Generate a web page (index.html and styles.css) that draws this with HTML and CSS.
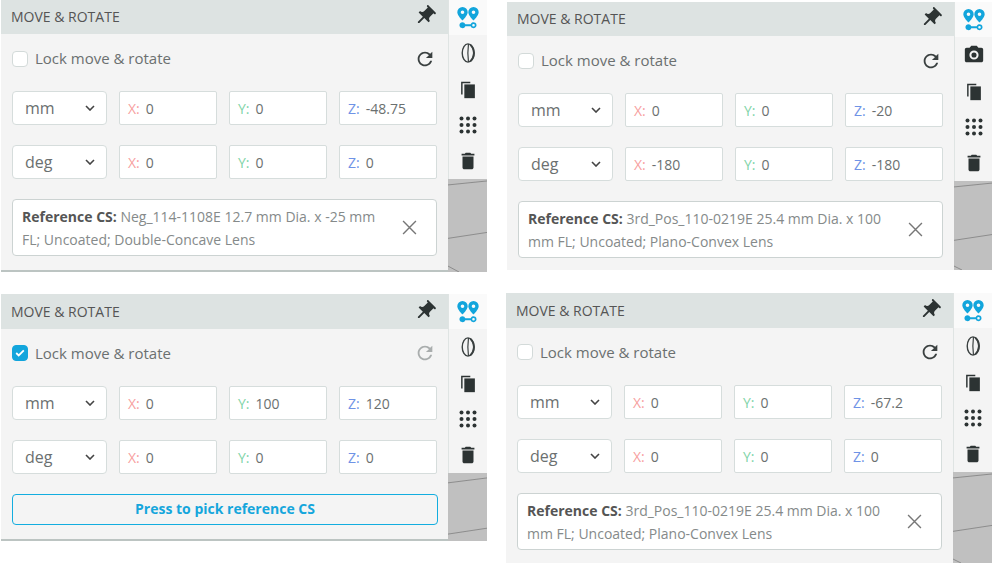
FILE: index.html
```html
<!DOCTYPE html>
<html lang="en">
<head>
    <meta charset="UTF-8">
    <meta name="viewport" content="width=device-width, initial-scale=1.0">
    <title>Move &amp; Rotate</title>
    <link rel="stylesheet" href="styles.css">
</head>
<body>
    <svg class="icon-defs" aria-hidden="true">
        <symbol id="i-pin" viewBox="0 0 24 24"><path d="M16 9V4h1c.55 0 1-.45 1-1s-.45-1-1-1H7c-.55 0-1 .45-1 1s.45 1 1 1h1v5c0 1.66-1.34 3-3 3v2h5.97v7l1 1 1-1v-7H19v-2c-1.66 0-3-1.34-3-3z" transform="rotate(45 12 12)"/></symbol>
        <symbol id="i-refresh" viewBox="0 0 24 24"><path d="M17.65 6.35C16.2 4.9 14.21 4 12 4c-4.42 0-7.99 3.58-7.99 8s3.57 8 7.99 8c3.73 0 6.84-2.55 7.73-6h-2.08c-.82 2.33-3.04 4-5.65 4-3.31 0-6-2.69-6-6s2.69-6 6-6c1.66 0 3.14.69 4.22 1.78L13 11h7V4l-2.35 2.35z"/></symbol>
        <symbol id="i-points" viewBox="0 0 22 22">
            <path fill-rule="evenodd" d="M5.500 0A5.200 5.200 0 0 0 .3 5.200c0 3.400 5.200 8.300 5.200 8.300s5.200-4.900 5.200-8.300A5.200 5.200 0 0 0 5.500 0zm0 3.400a1.800 1.800 0 1 1 0 3.600 1.800 1.800 0 0 1 0-3.600z"/>
            <path fill-rule="evenodd" d="M16.500 0a5.200 5.200 0 0 0-5.200 5.200c0 3.400 5.200 8.300 5.200 8.300s5.200-4.900 5.200-8.300A5.200 5.200 0 0 0 16.500 0zm0 3.400a1.800 1.800 0 1 1 0 3.600 1.800 1.800 0 0 1 0-3.600z"/>
            <path fill-rule="evenodd" d="M5.500 15.200a3 3 0 0 1 2.800 2h5.400a3 3 0 1 1 0 2H8.300a3 3 0 1 1-2.800-4zm11 1.700a1.300 1.300 0 1 0 0 2.600 1.300 1.300 0 0 0 0-2.600z"/>
        </symbol>
        <symbol id="i-lens" viewBox="0 0 24 24">
            <g fill="none" stroke="currentColor">
                <ellipse cx="12" cy="12" rx="6.300" ry="10" stroke-width="1.500"/>
                <path d="M12.500 2.200c-.8 6-.8 13.500 0 19.600" stroke-width="1.300"/>
                <path d="M14.500 3c2.800 2.500 4 5.800 4 9s-1.200 6.500-4 9" stroke-width="2.200"/>
            </g>
        </symbol>
        <symbol id="i-camera" viewBox="0 0 24 24"><path fill-rule="evenodd" d="M9 2 7.170 4H4c-1.100 0-2 .9-2 2v12c0 1.100.9 2 2 2h16c1.100 0 2-.9 2-2V6c0-1.100-.9-2-2-2h-3.170L15 2H9zm3 5a5 5 0 1 1 0 10 5 5 0 0 1 0-10zm0 2.200a2.800 2.800 0 1 0 0 5.600 2.800 2.800 0 0 0 0-5.600z"/></symbol>
        <symbol id="i-copy" viewBox="0 0 24 24"><path d="M4.500 4h10v1.600H6.100V18H4.500V4z"/><path d="M8 7h11.500v15H8z"/></symbol>
        <symbol id="i-grid" viewBox="0 0 18 18">
            <circle cx="2.500" cy="2.500" r="2"/><circle cx="9" cy="2.500" r="2"/><circle cx="15.500" cy="2.500" r="2"/>
            <circle cx="2.500" cy="9" r="2"/><circle cx="9" cy="9" r="2"/><circle cx="15.500" cy="9" r="2"/>
            <circle cx="2.500" cy="15.500" r="2"/><circle cx="9" cy="15.500" r="2"/><circle cx="15.500" cy="15.500" r="2"/>
        </symbol>
        <symbol id="i-trash" viewBox="0 0 24 24"><path d="M6 19c0 1.100.9 2 2 2h8c1.100 0 2-.9 2-2V7H6v12zM19 4h-3.500l-1-1h-5l-1 1H5v2h14V4z"/></symbol>
        <symbol id="i-chevron" viewBox="0 0 10 6"><path d="M1 1l4 4 4-4" fill="none" stroke="currentColor" stroke-width="1.600"/></symbol>
        <symbol id="i-close" viewBox="0 0 14 14"><path d="M1 1l12 12M13 1L1 13" fill="none" stroke="currentColor" stroke-width="1.300"/></symbol>
    </svg>

    <div class="board">

        <div class="panel panel-a">
            <div class="main">
                <div class="head">
                    <span class="title">MOVE &amp; ROTATE</span>
                    <svg class="pin-btn"><use href="#i-pin"/></svg>
                </div>
                <div class="body">
                    <div class="lock-row">
                        <span class="check"></span>
                        <span class="lock-text">Lock move &amp; rotate</span>
                        <svg class="reset"><use href="#i-refresh"/></svg>
                    </div>
                    <div class="field-row">
                        <div class="unit">mm<svg class="chevron"><use href="#i-chevron"/></svg></div>
                        <div class="field"><span class="ax-x">X:</span>0</div>
                        <div class="field"><span class="ax-y">Y:</span>0</div>
                        <div class="field"><span class="ax-z">Z:</span>-48.75</div>
                    </div>
                    <div class="field-row">
                        <div class="unit">deg<svg class="chevron"><use href="#i-chevron"/></svg></div>
                        <div class="field"><span class="ax-x">X:</span>0</div>
                        <div class="field"><span class="ax-y">Y:</span>0</div>
                        <div class="field"><span class="ax-z">Z:</span>0</div>
                    </div>
                    <div class="ref-box">
                        <p class="ref-text"><b>Reference CS:</b> Neg_114-1108E 12.7 mm Dia. x -25 mm FL; Uncoated; Double-Concave Lens</p>
                        <svg class="close"><use href="#i-close"/></svg>
                    </div>
                </div>
            </div>
            <div class="side">
                <div class="tool active"><svg class="tool-points"><use href="#i-points"/></svg></div>
                <div class="tool"><svg><use href="#i-lens"/></svg></div>
                <div class="tool"><svg><use href="#i-copy"/></svg></div>
                <div class="tool"><svg class="tool-grid"><use href="#i-grid"/></svg></div>
                <div class="tool"><svg><use href="#i-trash"/></svg></div>
                <div class="scene"><svg viewBox="0 0 39 94" preserveAspectRatio="none"><path d="M0 6l39-4M0 60l39-6M0 88l11 6"/></svg></div>
            </div>
        </div>

        <div class="panel panel-b">
            <div class="main">
                <div class="head">
                    <span class="title">MOVE &amp; ROTATE</span>
                    <svg class="pin-btn"><use href="#i-pin"/></svg>
                </div>
                <div class="body">
                    <div class="lock-row">
                        <span class="check"></span>
                        <span class="lock-text">Lock move &amp; rotate</span>
                        <svg class="reset"><use href="#i-refresh"/></svg>
                    </div>
                    <div class="field-row">
                        <div class="unit">mm<svg class="chevron"><use href="#i-chevron"/></svg></div>
                        <div class="field"><span class="ax-x">X:</span>0</div>
                        <div class="field"><span class="ax-y">Y:</span>0</div>
                        <div class="field"><span class="ax-z">Z:</span>-20</div>
                    </div>
                    <div class="field-row">
                        <div class="unit">deg<svg class="chevron"><use href="#i-chevron"/></svg></div>
                        <div class="field"><span class="ax-x">X:</span>-180</div>
                        <div class="field"><span class="ax-y">Y:</span>0</div>
                        <div class="field"><span class="ax-z">Z:</span>-180</div>
                    </div>
                    <div class="ref-box">
                        <p class="ref-text"><b>Reference CS:</b> 3rd_Pos_110-0219E 25.4 mm Dia. x 100 mm FL; Uncoated; Plano-Convex Lens</p>
                        <svg class="close"><use href="#i-close"/></svg>
                    </div>
                </div>
            </div>
            <div class="side">
                <div class="tool active"><svg class="tool-points"><use href="#i-points"/></svg></div>
                <div class="tool"><svg><use href="#i-camera"/></svg></div>
                <div class="tool"><svg><use href="#i-copy"/></svg></div>
                <div class="tool"><svg class="tool-grid"><use href="#i-grid"/></svg></div>
                <div class="tool"><svg><use href="#i-trash"/></svg></div>
                <div class="scene"><svg viewBox="0 0 39 90" preserveAspectRatio="none"><path d="M0 6l39-4M0 60l39-6M0 86l8 4"/></svg></div>
            </div>
        </div>

        <div class="panel panel-c">
            <div class="main">
                <div class="head">
                    <span class="title">MOVE &amp; ROTATE</span>
                    <svg class="pin-btn"><use href="#i-pin"/></svg>
                </div>
                <div class="body">
                    <div class="lock-row">
                        <span class="check checked"><svg viewBox="0 0 10 8"><path d="M1.200 4l2.500 2.400L8.800 1.400"/></svg></span>
                        <span class="lock-text">Lock move &amp; rotate</span>
                        <svg class="reset dim"><use href="#i-refresh"/></svg>
                    </div>
                    <div class="field-row">
                        <div class="unit">mm<svg class="chevron"><use href="#i-chevron"/></svg></div>
                        <div class="field"><span class="ax-x">X:</span>0</div>
                        <div class="field"><span class="ax-y">Y:</span>100</div>
                        <div class="field"><span class="ax-z">Z:</span>120</div>
                    </div>
                    <div class="field-row">
                        <div class="unit">deg<svg class="chevron"><use href="#i-chevron"/></svg></div>
                        <div class="field"><span class="ax-x">X:</span>0</div>
                        <div class="field"><span class="ax-y">Y:</span>0</div>
                        <div class="field"><span class="ax-z">Z:</span>0</div>
                    </div>
                    <button class="pick-btn">Press to pick reference CS</button>
                </div>
            </div>
            <div class="side">
                <div class="tool active"><svg class="tool-points"><use href="#i-points"/></svg></div>
                <div class="tool"><svg><use href="#i-lens"/></svg></div>
                <div class="tool"><svg><use href="#i-copy"/></svg></div>
                <div class="tool"><svg class="tool-grid"><use href="#i-grid"/></svg></div>
                <div class="tool"><svg><use href="#i-trash"/></svg></div>
                <div class="scene"><svg viewBox="0 0 39 69" preserveAspectRatio="none"><path d="M0 10l39-5M0 62l39-6"/></svg></div>
            </div>
        </div>

        <div class="panel panel-d">
            <div class="main">
                <div class="head">
                    <span class="title">MOVE &amp; ROTATE</span>
                    <svg class="pin-btn"><use href="#i-pin"/></svg>
                </div>
                <div class="body">
                    <div class="lock-row">
                        <span class="check"></span>
                        <span class="lock-text">Lock move &amp; rotate</span>
                        <svg class="reset"><use href="#i-refresh"/></svg>
                    </div>
                    <div class="field-row">
                        <div class="unit">mm<svg class="chevron"><use href="#i-chevron"/></svg></div>
                        <div class="field"><span class="ax-x">X:</span>0</div>
                        <div class="field"><span class="ax-y">Y:</span>0</div>
                        <div class="field"><span class="ax-z">Z:</span>-67.2</div>
                    </div>
                    <div class="field-row">
                        <div class="unit">deg<svg class="chevron"><use href="#i-chevron"/></svg></div>
                        <div class="field"><span class="ax-x">X:</span>0</div>
                        <div class="field"><span class="ax-y">Y:</span>0</div>
                        <div class="field"><span class="ax-z">Z:</span>0</div>
                    </div>
                    <div class="ref-box">
                        <p class="ref-text"><b>Reference CS:</b> 3rd_Pos_110-0219E 25.4 mm Dia. x 100 mm FL; Uncoated; Plano-Convex Lens</p>
                        <svg class="close"><use href="#i-close"/></svg>
                    </div>
                </div>
            </div>
            <div class="side">
                <div class="tool active"><svg class="tool-points"><use href="#i-points"/></svg></div>
                <div class="tool"><svg><use href="#i-lens"/></svg></div>
                <div class="tool"><svg><use href="#i-copy"/></svg></div>
                <div class="tool"><svg class="tool-grid"><use href="#i-grid"/></svg></div>
                <div class="tool"><svg><use href="#i-trash"/></svg></div>
                <div class="scene"><svg viewBox="0 0 39 92" preserveAspectRatio="none"><path d="M0 6l39-4M0 60l39-6M0 88l8 4"/></svg></div>
            </div>
        </div>

    </div>
</body>
</html>
```

FILE: styles.css
```css
html, body {
    margin: 0;
    background: #fff;
    overflow: hidden;
}

body {
    font-family: "Open Sans", "Noto Sans", sans-serif;
    color: #6b7070;
}

.icon-defs {
    display: none;
}

.board {
    display: grid;
    grid-template-columns: 486px 486px;
    grid-template-rows: 272px 270px;
    column-gap: 20px;
    row-gap: 22px;
    padding-left: 1px;
}

.panel {
    display: flex;
    width: 486px;
}

.panel-b {
    height: 268px;
    margin-top: 2px;
}

.panel-c {
    height: 247px;
}

.panel-d {
    height: 270px;
    margin-top: -1px;
    margin-left: -1px;
}

.main {
    width: 447px;
    background: #f4f4f4;
    display: flex;
    flex-direction: column;
}

.panel-a .main,
.panel-c .main {
    box-shadow: inset 0 -2px 0 #bcc4c2;
}

.head {
    height: 34px;
    flex: none;
    background: #dde3e2;
    display: flex;
    align-items: center;
    justify-content: space-between;
    padding: 0 11px 0 10px;
    color: #555;
}

.panel-c .head,
.panel-d .head {
    height: 35px;
}

.title {
    font-size: 14px;
    padding-bottom: 2px;
}

.panel-c .title,
.panel-d .title {
    padding-bottom: 0;
}

.pin-btn {
    width: 24px;
    height: 24px;
    margin-bottom: 2px;
    fill: #2c3333;
}

.body {
    padding: 0 11px;
}

.lock-row {
    display: flex;
    align-items: center;
    height: 49px;
    margin-bottom: 8px;
}

.panel-c .lock-row,
.panel-d .lock-row {
    height: 48px;
    margin-bottom: 9px;
}

.check {
    width: 14px;
    height: 14px;
    border: 1px solid #d3dad9;
    border-radius: 4px;
    background: #fff;
    margin-right: 7px;
    display: flex;
    align-items: center;
    justify-content: center;
}

.check.checked {
    background: #12a5dc;
    border-color: #12a5dc;
}

.check svg {
    width: 10px;
    height: 8px;
    fill: none;
    stroke: #fff;
    stroke-width: 1.8;
}

.lock-text {
    font-size: 15px;
    flex: 1;
    padding-bottom: 2px;
}

.panel-c .lock-text,
.panel-d .lock-text {
    padding-bottom: 0;
}

.reset {
    width: 22px;
    height: 22px;
    margin-right: 1px;
    fill: #3a4040;
}

.reset.dim {
    fill: #a9adad;
}

.field-row {
    display: flex;
    gap: 12px;
    margin-bottom: 20px;
}

.unit,
.field {
    height: 32px;
    background: #fff;
    border: 1px solid #d6dddc;
    display: flex;
    align-items: center;
}

.unit {
    width: 81px;
    border-radius: 4px;
    padding-left: 12px;
    font-size: 16px;
    justify-content: space-between;
    flex: none;
}

.chevron {
    width: 10px;
    height: 6px;
    margin-right: 11px;
    color: #444;
}

.field {
    width: 96px;
    border-radius: 2px;
    font-size: 14px;
    flex: none;
}

.ax-x,
.ax-y,
.ax-z {
    margin: 0 6px 0 8px;
}

.ax-x {
    color: #f7a0a0;
}

.ax-y {
    color: #7fd4a8;
}

.ax-z {
    color: #6f93e6;
}

.ref-box {
    display: flex;
    align-items: center;
    height: 55px;
    width: 423px;
    background: #fff;
    border: 1px solid #ccd3d2;
    border-radius: 4px;
}

.ref-text {
    margin: 0;
    padding-left: 9px;
    width: 365px;
    font-size: 14px;
    line-height: 23px;
    color: #858a8a;
}

.ref-text b {
    color: #555;
}

.close {
    width: 15px;
    height: 15px;
    margin-left: 15px;
    color: #777;
}

.pick-btn {
    display: block;
    width: 426px;
    height: 31px;
    padding: 0 0 2px;
    background: transparent;
    border: 1px solid #12addf;
    border-radius: 4px;
    color: #15a6dc;
    font-family: inherit;
    font-size: 14px;
    font-weight: 700;
}

.side {
    width: 39px;
    display: flex;
    flex-direction: column;
    background: #f4f4f4;
    border-left: 1px solid #dfe4e3;
    box-sizing: border-box;
}

.tool {
    height: 36px;
    flex: none;
    display: flex;
    align-items: center;
    justify-content: center;
    color: #3a4040;
}

.tool.active {
    height: 35px;
    background: #fafafa;
}

.tool svg {
    width: 22px;
    height: 22px;
    fill: #2c3333;
}

.tool .tool-points {
    fill: #12a5dc;
}

.tool .tool-grid {
    width: 18px;
    height: 18px;
}

.scene {
    flex: 1;
    min-height: 0;
    margin-left: -1px;
    background: #c0c0c0;
}

.scene svg {
    display: block;
    width: 100%;
    height: 100%;
    fill: none;
    stroke: #8c8c8c;
    stroke-width: 1;
}
```
